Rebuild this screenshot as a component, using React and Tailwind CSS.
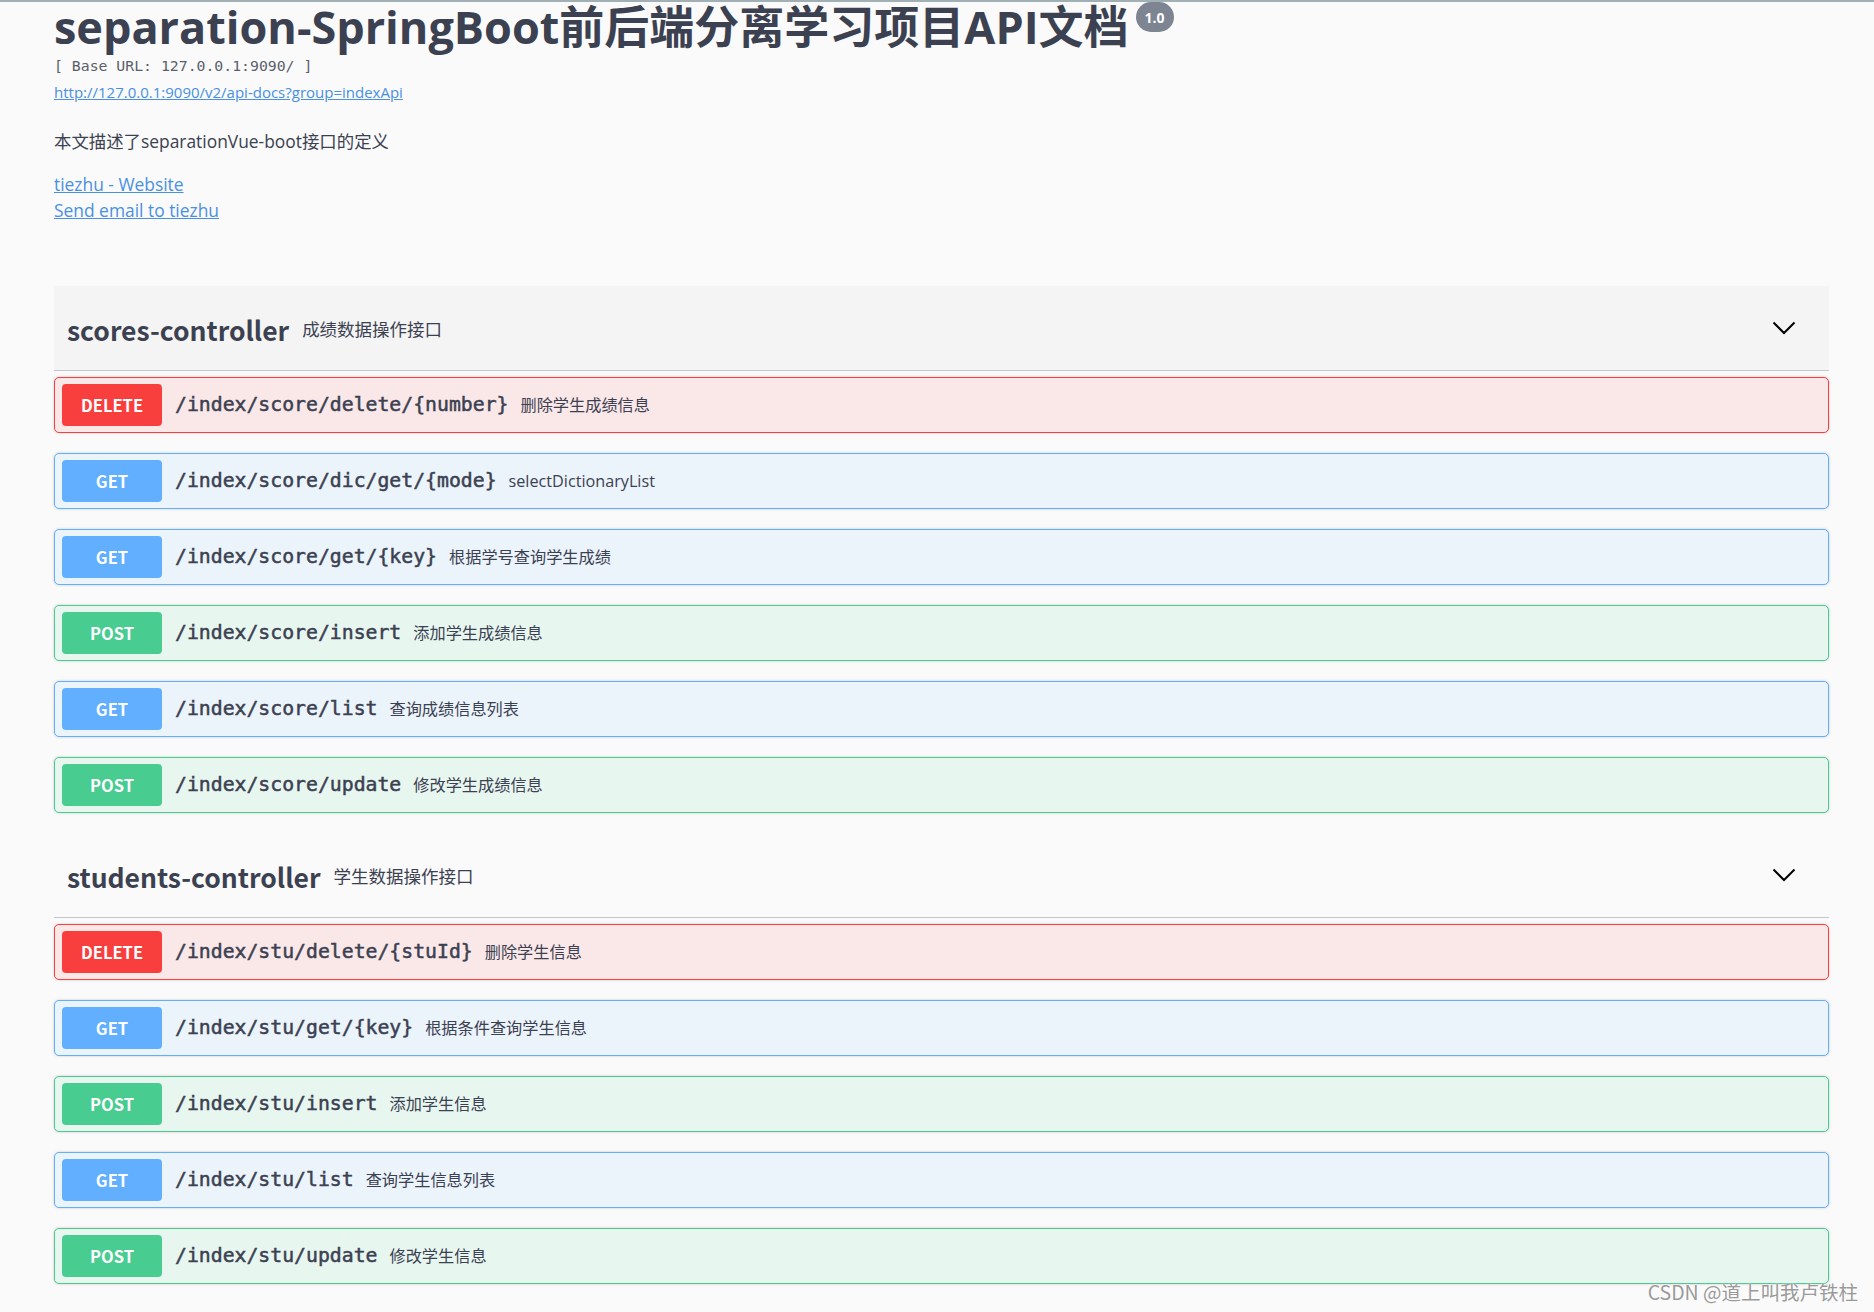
const sans = "font-['Open_Sans','Noto_Sans_CJK_SC',sans-serif]"
const cond = "font-['Noto_Sans_CJK_SC','Noto_Sans',sans-serif]"
const mono = "font-['DejaVu_Sans_Mono','Liberation_Mono',monospace]"

const styles = {
  DELETE: { row: "bg-[#fae7e7] border-[#f93e3e]", badge: "bg-[#f93e3e]" },
  GET: { row: "bg-[#ebf3fb] border-[#61affe]", badge: "bg-[#61affe]" },
  POST: { row: "bg-[#e8f6f0] border-[#49cc90]", badge: "bg-[#49cc90]" },
}

const scores = [
  { m: "DELETE", path: "/index/score/delete/{number}", desc: "删除学生成绩信息" },
  { m: "GET", path: "/index/score/dic/get/{mode}", desc: "selectDictionaryList" },
  { m: "GET", path: "/index/score/get/{key}", desc: "根据学号查询学生成绩" },
  { m: "POST", path: "/index/score/insert", desc: "添加学生成绩信息" },
  { m: "GET", path: "/index/score/list", desc: "查询成绩信息列表" },
  { m: "POST", path: "/index/score/update", desc: "修改学生成绩信息" },
]

const students = [
  { m: "DELETE", path: "/index/stu/delete/{stuId}", desc: "删除学生信息" },
  { m: "GET", path: "/index/stu/get/{key}", desc: "根据条件查询学生信息" },
  { m: "POST", path: "/index/stu/insert", desc: "添加学生信息" },
  { m: "GET", path: "/index/stu/list", desc: "查询学生信息列表" },
  { m: "POST", path: "/index/stu/update", desc: "修改学生信息" },
]

function Chevron() {
  return (
    <svg width="24" height="14" viewBox="0 0 24 14" fill="none">
      <path d="M1.5 1.5 L12 12 L22.5 1.5" stroke="#000" strokeWidth="2" />
    </svg>
  )
}

function OpRow({ op }) {
  const s = styles[op.m]
  return (
    <div className={`h-[56px] flex items-center border rounded-[5px] shadow-[0_0_3px_rgba(0,0,0,0.19)] ${s.row}`}>
      <div className={`ml-[7px] w-[100px] h-[42px] rounded-[4px] flex items-center justify-center text-white text-[16.5px] font-bold ${cond} ${s.badge}`}>
        {op.m}
      </div>
      <span className={`ml-[13px] text-[19.8px] text-[#3b4151] [-webkit-text-stroke:0.5px_#3b4151] ${mono}`}>
        {op.path}
      </span>
      <span className={`ml-[12px] text-[16.2px] text-[#3b4151] ${sans}`}>
        {op.desc}
      </span>
    </div>
  )
}

function Section({ name, desc, ops, hover }) {
  return (
    <div>
      <div className={`h-[85px] pt-[3px] flex items-center border-b border-[#c5c7cb] ${hover ? "bg-[#f4f4f4]" : ""}`}>
        <h4 className={`ml-[13px] text-[26.5px] font-bold text-[#3b4151] ${cond}`}>{name}</h4>
        <span className={`ml-[13px] text-[17.5px] text-[#3b4151] ${sans}`}>{desc}</span>
        <div className="ml-auto mr-[33px] mb-[4px]">
          <Chevron />
        </div>
      </div>
      <div className="mt-[6px] flex flex-col gap-[20px]">
        {ops.map((op) => (
          <OpRow key={op.path} op={op} />
        ))}
      </div>
    </div>
  )
}

export default function App() {
  return (
    <div className="relative min-h-screen bg-[#fafafa] border-t-2 border-[#a1b0b5]">
      <div className="pl-[54px] pr-[45px] pb-[30px]">

        <div className="flex items-start">
          <h2 className={`text-[45px] leading-[50px] font-bold text-[#3b4151] ${sans}`}>
            separation-SpringBoot前后端分离学习项目API文档
          </h2>
          <span className={`ml-[7px] h-[30px] px-[9px] rounded-full bg-[#7d8492] text-white text-[14px] font-bold flex items-center ${sans}`}>
            1.0
          </span>
        </div>

        <div className={`mt-[4px] leading-[20px] text-[14.8px] text-[#5a5f6b] ${mono}`}>
          [ Base URL: 127.0.0.1:9090/ ]
        </div>
        <div className="mt-[6px] leading-[20px]">
          <a href="#" className={`text-[15px] text-[#4990e2] underline ${sans}`}>
            http://127.0.0.1:9090/v2/api-docs?group=indexApi
          </a>
        </div>

        <p className={`mt-[27px] leading-[24px] text-[17.4px] text-[#3b4151] ${sans}`}>
          本文描述了separationVue-boot接口的定义
        </p>

        <div className={`mt-[19px] leading-[24px] text-[17.4px] ${sans}`}>
          <a href="#" className="text-[#4990e2] underline">tiezhu - Website</a>
        </div>
        <div className={`mt-[2px] leading-[24px] text-[17.4px] ${sans}`}>
          <a href="#" className="text-[#4990e2] underline">Send email to tiezhu</a>
        </div>

        <div className="mt-[64px] flex flex-col gap-[20px]">
          <Section name="scores-controller" desc="成绩数据操作接口" ops={scores} hover />
          <Section name="students-controller" desc="学生数据操作接口" ops={students} />
        </div>
      </div>

      <div className={`absolute right-[16px] bottom-[8px] text-[19.5px] text-[#9a9a9a] [text-shadow:0_0_2px_#fff] ${cond}`}>
        CSDN @道上叫我卢铁柱
      </div>
    </div>
  )
}
